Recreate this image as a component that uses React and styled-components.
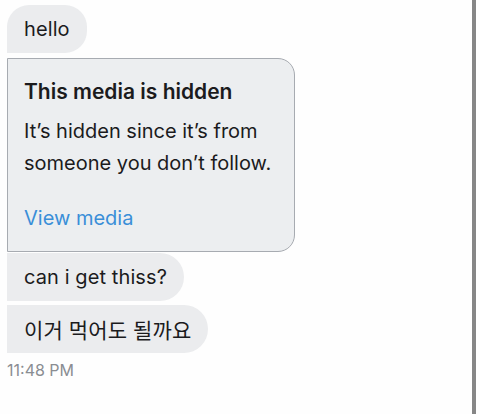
import React from "react";
import styled, { createGlobalStyle } from "styled-components";

const GlobalStyle = createGlobalStyle`
  html, body {
    margin: 0;
    padding: 0;
    background: #fefefe;
  }
  body {
    font-family: Inter, "Liberation Sans", "Noto Sans CJK KR", sans-serif;
    -webkit-font-smoothing: antialiased;
  }
`;

const Screen = styled.div`
  display: flex;
  width: 480px;
  height: 414px;
  overflow: hidden;
`;

const Thread = styled.div`
  flex: 1;
  display: flex;
  flex-direction: column;
  align-items: flex-start;
  padding: 5px 0 0 7px;
`;

const Divider = styled.div`
  width: 4px;
  margin-right: 4px;
  background: #868686;
`;

const Bubble = styled.div`
  box-sizing: border-box;
  height: 48px;
  display: flex;
  align-items: center;
  padding: 0 17px;
  margin-top: ${(p) => p.gap || 0}px;
  background: #ebecee;
  color: #1b1b1d;
  font-size: ${(p) => p.size || 20}px;
  letter-spacing: 0.1px;
  border-radius: ${(p) => (p.first ? "22px 22px 22px 0" : "0 24px 24px 0")};
`;

const MediaCard = styled.div`
  box-sizing: border-box;
  width: 288px;
  margin-top: 5px;
  padding: 19px 16px 0 16px;
  height: 194px;
  background: #eceef0;
  border: 1px solid #a7abb1;
  border-radius: 0 17px 17px 0;
  color: #1b1b1d;
`;

const Title = styled.div`
  font-weight: 600;
  font-size: 21px;
  line-height: 28px;
`;

const Body = styled.div`
  font-size: 20px;
  line-height: 32px;
  margin-top: 9px;
`;

const Link = styled.div`
  font-size: 20px;
  line-height: 28px;
  margin-top: 25px;
  color: #3a8ed8;
`;

const Time = styled.div`
  margin-top: 7px;
  font-size: 16px;
  color: #8a8d92;
`;

export default function App() {
  return (
    <Screen>
      <GlobalStyle />
      <Thread>
        <Bubble first>hello</Bubble>
        <MediaCard>
          <Title>This media is hidden</Title>
          <Body>
            It’s hidden since it’s from
            <br />
            someone you don’t follow.
          </Body>
          <Link>View media</Link>
        </MediaCard>
        <Bubble gap={1}>can i get thiss?</Bubble>
        <Bubble gap={4} size={21}>
          이거 먹어도 될까요
        </Bubble>
        <Time>11:48 PM</Time>
      </Thread>
      <Divider />
    </Screen>
  );
}
